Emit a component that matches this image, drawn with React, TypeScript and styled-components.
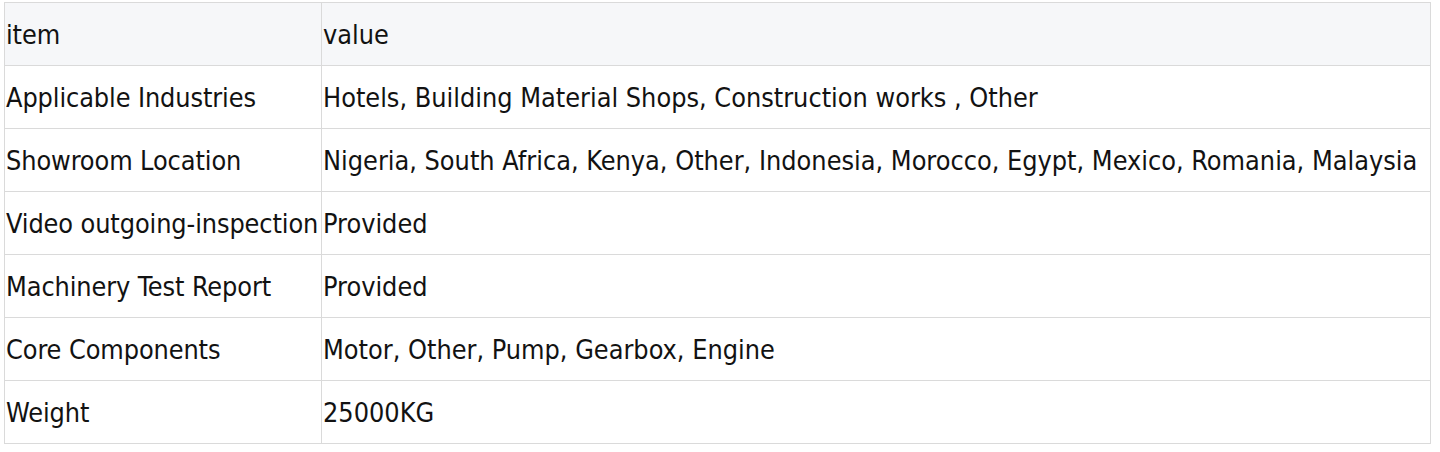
import React from "react";
import styled, { createGlobalStyle } from "styled-components";

const Global = createGlobalStyle`
  html, body { margin: 0; padding: 0; background: #ffffff; }
  body { font-family: "DejaVu Sans Condensed", "DejaVu Sans", sans-serif; }
`;

const Page = styled.div`
  padding: 2px 0 0 4px;
`;

const Table = styled.table`
  width: 1427px;
  border-collapse: collapse;
  table-layout: fixed;
  font-family: "DejaVu Sans Condensed", "DejaVu Sans", sans-serif;
  font-size: 26.8px;
  color: #121212;
`;

const Row = styled.tr<{ $head?: boolean }>`
  background: ${(p) => (p.$head ? "#f6f7f9" : "#ffffff")};
`;

const Cell = styled.td<{ $key?: boolean }>`
  border: 1px solid #dadada;
  height: 63px;
  padding: 1px 0 0 1px;
  box-sizing: border-box;
  width: ${(p) => (p.$key ? "317px" : "auto")};
  white-space: nowrap;
  vertical-align: middle;
  letter-spacing: ${(p) => (p.$key ? "-0.1px" : "0")};
`;

const rows: [string, string][] = [
  ["Applicable Industries", "Hotels, Building Material Shops, Construction works , Other"],
  ["Showroom Location", "Nigeria, South Africa, Kenya, Other, Indonesia, Morocco, Egypt, Mexico, Romania, Malaysia"],
  ["Video outgoing-inspection", "Provided"],
  ["Machinery Test Report", "Provided"],
  ["Core Components", "Motor, Other, Pump, Gearbox, Engine"],
  ["Weight", "25000KG"],
];

export default function App() {
  return (
    <>
      <Global />
      <Page>
        <Table>
          <tbody>
            <Row $head>
              <Cell $key>item</Cell>
              <Cell>value</Cell>
            </Row>
            {rows.map(([k, v]) => (
              <Row key={k}>
                <Cell $key>{k}</Cell>
                <Cell>{v}</Cell>
              </Row>
            ))}
          </tbody>
        </Table>
      </Page>
    </>
  );
}
